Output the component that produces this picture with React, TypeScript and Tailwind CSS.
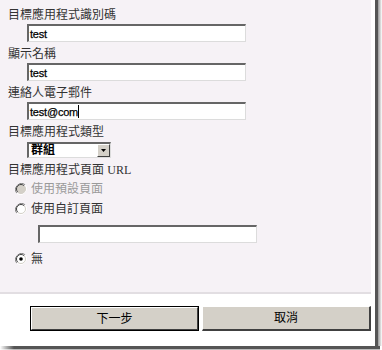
import React from "react";

const FONT = "font-['Liberation_Sans','Noto_Sans_CJK_TC',sans-serif]";

function Label({ children }: { children: React.ReactNode }) {
  return <div className="h-[16px] leading-[16px] text-[12px] text-[#333]">{children}</div>;
}

function TextInput({ value, caret, className }: { value?: string; caret?: boolean; className: string }) {
  return (
    <div
      className={`h-[18px] bg-white border-t-2 border-l-2 border-b border-r border-t-[#666] border-l-[#666] border-b-[#dcdcdc] border-r-[#dcdcdc] flex items-center pl-[1px] text-[11px] text-black font-['Liberation_Sans',sans-serif] ${className}`}
    >
      <span className="leading-[14px] tracking-[-0.2px] [-webkit-text-stroke:0.25px_black]">{value}</span>
      {caret && <span className="w-[1px] h-[13px] bg-black" />}
    </div>
  );
}

function Radio({ state }: { state: "disabled" | "off" | "on" }) {
  const fill = state === "disabled" ? "#d4d0c8" : "#ffffff";
  return (
    <svg width="12" height="12" viewBox="0 0 12 12" className="shrink-0">
      <path d="M10.2 1.8 A6 6 0 0 0 1.8 10.2" fill="none" stroke="#808080" strokeWidth="1" />
      <path d="M1.8 10.2 A6 6 0 0 0 10.2 1.8" fill="none" stroke="#ffffff" strokeWidth="1" />
      <circle cx="6" cy="6" r="4.6" fill={fill} />
      <path d="M9.2 2.8 A4.5 4.5 0 0 0 2.8 9.2" fill="none" stroke="#404040" strokeWidth="1" />
      <path d="M2.8 9.2 A4.5 4.5 0 0 0 9.2 2.8" fill="none" stroke="#d4d0c8" strokeWidth="1" />
      {state === "on" && <circle cx="6" cy="6" r="1.8" fill="#000" />}
    </svg>
  );
}

export default function App() {
  return (
    <div className={`w-[382px] h-[350px] bg-white flex flex-col ${FONT}`}>
      <div className="flex h-[346px]">
        <div className="w-[375px] flex flex-col bg-white">
          <div className="w-[371px] h-[292px] bg-[#f6f2f6] pl-[8px] pt-[7px] flex flex-col">
            <Label>目標應用程式識別碼</Label>
            <TextInput value="test" className="ml-[19px] mt-[1px] w-[219px]" />
            <div className="mt-[4px]">
              <Label>顯示名稱</Label>
            </div>
            <TextInput value="test" className="ml-[19px] mt-[1px] w-[219px]" />
            <div className="mt-[4px]">
              <Label>連絡人電子郵件</Label>
            </div>
            <TextInput value="test@com" caret className="ml-[19px] mt-[1px] w-[219px]" />
            <div className="mt-[4px]">
              <Label>目標應用程式類型</Label>
            </div>
            <div className="ml-[19px] mt-[2px] w-[84px] h-[16px] bg-white border-t-2 border-l-2 border-b border-r border-t-[#666] border-l-[#666] border-b-[#dcdcdc] border-r-[#dcdcdc] flex items-stretch">
              <span className="flex-1 text-[12px] leading-[13px] pl-[2px] text-black font-semibold">群組</span>
              <div className="w-[13px] bg-[#d4d0c8] border-t border-l border-b border-r border-t-white border-l-white border-b-[#404040] border-r-[#404040] flex items-center justify-center">
                <svg width="5" height="3" viewBox="0 0 5 3">
                  <path d="M0 0 H5 L2.5 3 Z" fill="#000" />
                </svg>
              </div>
            </div>
            <div className="mt-[4px]">
              <Label>
                目標應用程式頁面 <span className="font-['Liberation_Serif',serif]">URL</span>
              </Label>
            </div>
            <div className="mt-[3px] h-[16px] flex items-center ml-[7px] gap-[4px]">
              <Radio state="disabled" />
              <span className="text-[12px] leading-[16px] text-[#9a9a9a]">使用預設頁面</span>
            </div>
            <div className="mt-[4px] h-[16px] flex items-center ml-[7px] gap-[4px]">
              <Radio state="off" />
              <span className="text-[12px] leading-[16px] text-[#333]">使用自訂頁面</span>
            </div>
            <TextInput className="ml-[30px] mt-[8px] w-[219px]" />
            <div className="mt-[8px] h-[16px] flex items-center ml-[7px] gap-[4px]">
              <Radio state="on" />
              <span className="text-[12px] leading-[16px] text-[#333]">無</span>
            </div>
          </div>
          <div className="w-[371px] h-[2px] bg-[#e2dee2]" />
          <div className="flex gap-[3px] pl-[30px] pt-[12px]">
            <button className="w-[169px] h-[25px] bg-[#d4d0c8] border border-black flex">
              <span className="flex-1 flex items-center justify-center border-t border-l border-b border-r border-t-white border-l-white border-b-[#404040] border-r-[#404040] text-[12px] text-black">
                下一步
              </span>
            </button>
            <button className="w-[169px] h-[25px] bg-[#d4d0c8] border-t border-l border-b-2 border-r-2 border-t-white border-l-white border-b-[#404040] border-r-[#404040] flex items-center justify-center text-[12px] text-black">
              取消
            </button>
          </div>
        </div>
        <div className="w-[3px] bg-[#555]" />
        <div className="w-[4px] bg-[linear-gradient(to_right,#999,#fff)]" />
      </div>
      <div className="h-[3px] w-[380px] bg-[linear-gradient(to_right,#fff_0px,#555_14px,#555_100%)]" />
      <div className="h-[1px] w-[380px] bg-[linear-gradient(to_right,#fff_0px,#bbb_14px,#bbb_100%)]" />
    </div>
  );
}
